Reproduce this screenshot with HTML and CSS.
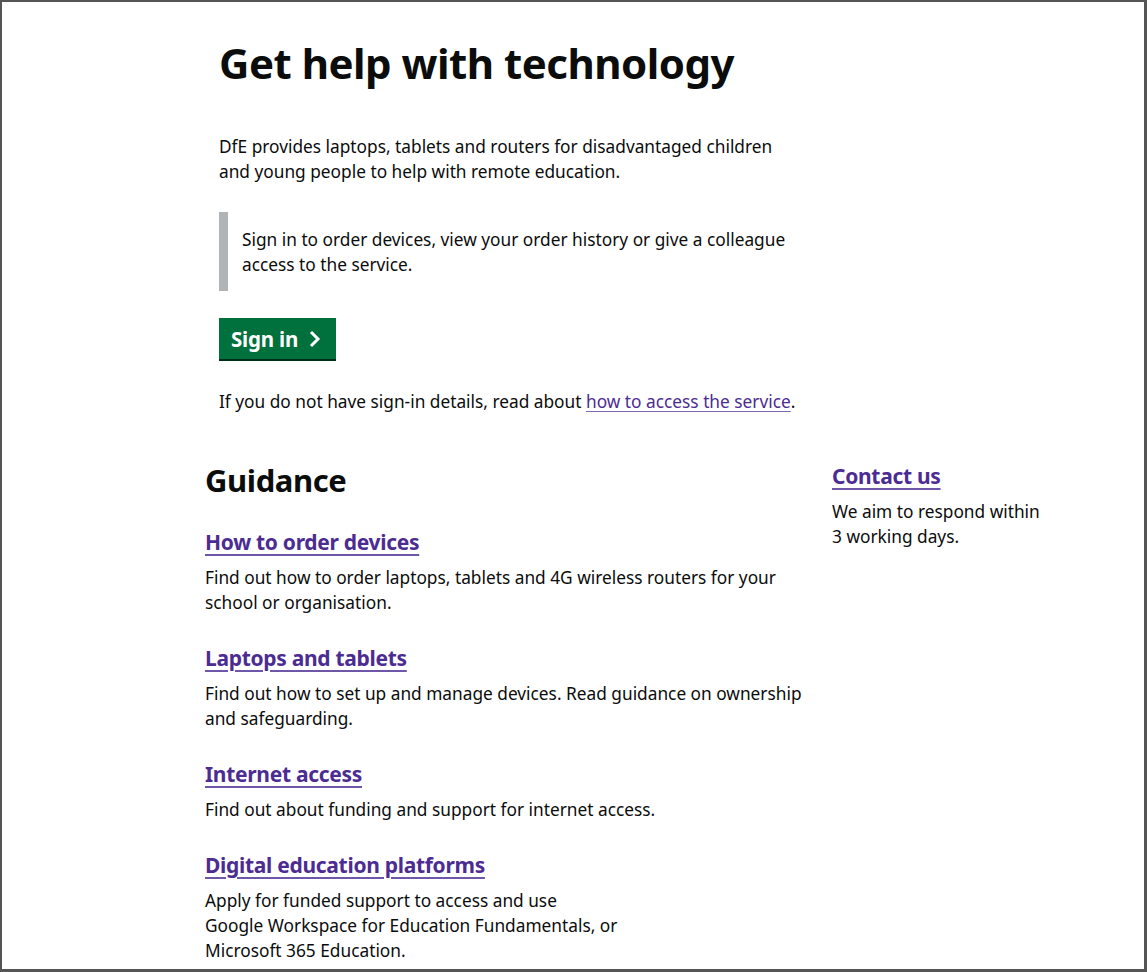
FILE: index.html
```html
<!DOCTYPE html>
<html lang="en">
<head>
<meta charset="utf-8">
<title>Get help with technology</title>
<link rel="stylesheet" href="styles.css">
</head>
<body>
<div class="frame">
  <main class="page">
    <div class="intro">
      <h1 class="title">Get help with technology</h1>
      <p class="lead">DfE provides laptops, tablets and routers for disadvantaged children<br>and young people to help with remote education.</p>
      <div class="inset">Sign in to order devices, view your order history or give a colleague<br>access to the service.</div>
      <a class="button" href="#">Sign in
        <svg class="chev" width="14" height="18" viewBox="0 0 14 18" aria-hidden="true"><path d="M3 2 L10 9 L3 16" fill="none" stroke="#fff" stroke-width="3"/></svg>
      </a>
      <p class="body">If you do not have sign-in details, read about <a class="link" href="#">how to access the service</a>.</p>
    </div>
    <div class="row">
      <div class="main-col">
        <h2 class="h-guidance">Guidance</h2>
        <div class="item">
          <a class="item-link" href="#">How to order devices</a>
          <p class="body">Find out how to order laptops, tablets and 4G wireless routers for your<br>school or organisation.</p>
        </div>
        <div class="item">
          <a class="item-link" href="#">Laptops and tablets</a>
          <p class="body">Find out how to set up and manage devices. Read guidance on ownership<br>and safeguarding.</p>
        </div>
        <div class="item">
          <a class="item-link" href="#">Internet access</a>
          <p class="body">Find out about funding and support for internet access.</p>
        </div>
        <div class="item">
          <a class="item-link" href="#">Digital education platforms</a>
          <p class="body">Apply for funded support to access and use<br>Google Workspace for Education Fundamentals, or<br>Microsoft 365 Education.</p>
        </div>
      </div>
      <aside class="side-col">
        <a class="item-link" href="#">Contact us</a>
        <p class="body">We aim to respond within<br>3 working days.</p>
      </aside>
    </div>
  </main>
</div>
</body>
</html>
```

FILE: styles.css
```css
* { box-sizing: border-box; }
html, body { margin: 0; padding: 0; background: #fff; }
body {
  font-family: "Noto Sans", "Liberation Sans", Arial, sans-serif;
  color: #0b0c0c;
}
.frame {
  width: 1147px;
  height: 972px;
  border-style: solid;
  border-color: #555;
  border-width: 2px 3px 3px 2px;
  overflow: hidden;
  background: #fff;
}
.page {
  padding: 35px 0 0 203px;
}
.intro {
  padding-left: 14px;
}
.title {
  margin: 0;
  font-size: 42px;
  line-height: 52px;
  font-weight: 700;
  letter-spacing: -0.5px;
}
.lead {
  margin: 45px 0 0;
  font-size: 17.3px;
  line-height: 25px;
}
.inset {
  margin-top: 28px;
  border-left: 9px solid #b1b4b6;
  padding: 15px 0 14px 14px;
  font-size: 17.3px;
  line-height: 25px;
  width: 620px;
}
.button {
  display: inline-flex;
  align-items: center;
  gap: 10px;
  margin-top: 27px;
  height: 41px;
  padding: 0 14px 0 12px;
  background: #00703c;
  color: #fff;
  font-weight: 700;
  font-size: 20.5px;
  text-decoration: none;
  box-shadow: 0 2px 0 #002d18;
  letter-spacing: -0.2px;
}
.chev { display: block; }
.body {
  margin: 0;
  font-size: 17.3px;
  line-height: 25px;
}
.intro .body { margin-top: 30px; }
.link { color: #4c2c92; text-decoration: underline; text-decoration-color: #7d68b5; text-underline-offset: 3px; }
.row {
  display: flex;
  margin-top: 46px;
}
.main-col { width: 627px; }
.h-guidance {
  margin: 0;
  font-size: 31px;
  line-height: 40px;
  font-weight: 700;
  letter-spacing: -0.4px;
}
.item { margin-top: 29px; }
.item + .item { margin-top: 30px; }
.item-link {
  display: inline-block;
  color: #4c2c92;
  font-weight: 700;
  font-size: 21px;
  line-height: 26px;
  text-decoration: underline;
  text-decoration-thickness: 2px;
  text-decoration-color: #6e56a8;
  text-underline-offset: 4px;
  letter-spacing: -0.3px;
}
.item .body { margin-top: 10px; }
.side-col { margin-top: 3px; }
.side-col .body { margin-top: 10px; }
```
